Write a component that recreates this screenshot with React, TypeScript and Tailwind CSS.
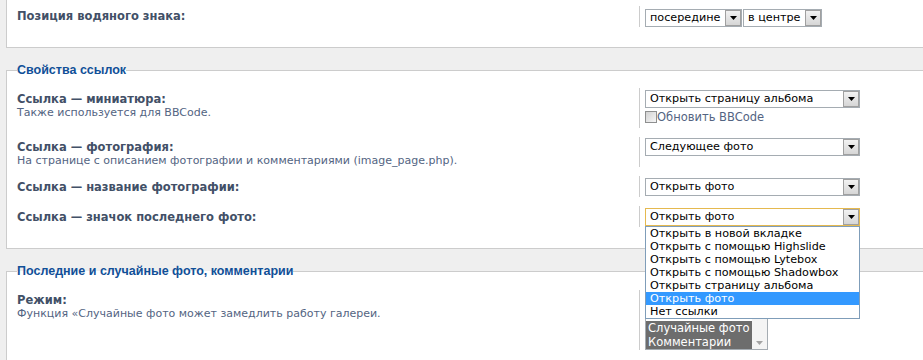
import React from "react";

function ArrowBtn() {
  return (
    <div className="h-[16px] w-[16px] shrink-0 flex items-center justify-center border border-[#a0a0a0] bg-gradient-to-b from-[#f2f2f2] to-[#d6d6d6]">
      <svg width="7" height="4" viewBox="0 0 7 4">
        <path d="M0 0H7L3.5 4Z" fill="#000" />
      </svg>
    </div>
  );
}

function Select({
  value,
  className,
  focused,
}: {
  value: string;
  className: string;
  focused?: boolean;
}) {
  return (
    <div
      className={
        "flex items-center h-[18px] border bg-white " +
        (focused ? "border-[#e5b94f] " : "border-[#a5acb2] ") +
        className
      }
    >
      <span className="flex-1 pl-[4px] text-[11.2px] leading-[16px] text-black whitespace-nowrap overflow-hidden">
        {value}
      </span>
      <ArrowBtn />
    </div>
  );
}

const options = [
  "Открыть в новой вкладке",
  "Открыть с помощью Highslide",
  "Открыть с помощью Lytebox",
  "Открыть с помощью Shadowbox",
  "Открыть страницу альбома",
  "Открыть фото",
  "Нет ссылки",
];

export default function App() {
  return (
    <div className="w-[923px] h-[360px] overflow-hidden bg-[#efefef] font-['DejaVu_Sans',Verdana,sans-serif]">
      <div className="w-[1000px] pl-[6px]">
        {/* Fieldset 1 */}
        <fieldset className="bg-white border-l border-b border-[#cccccc] pt-[6px] pb-[20px] pl-[10px]">
          <div className="grid grid-cols-[622px_1fr]">
            <div className="pt-[4px] text-[11px] leading-[13px]">
              <div className="font-bold text-[11.5px] text-[#425067]">Позиция водяного знака:</div>
            </div>
            <div className="border-l border-[#cccccc] pl-[5px] pt-[3px] flex gap-[1px]">
              <Select value="посередине" className="w-[97px]" />
              <Select value="в центре" className="w-[79px]" />
            </div>
          </div>
        </fieldset>

        {/* Fieldset 2 */}
        <fieldset className="mt-[15px] bg-white border border-r-0 border-[#cccccc] pl-[10px] pt-[11px] pb-[21px]">
          <legend className="font-['Liberation_Sans',Arial,sans-serif] text-[12.5px] leading-[14px] font-bold text-[#115098]">
            Свойства ссылок
          </legend>

          <div className="grid grid-cols-[622px_1fr]">
            <div className="pt-[5px] text-[11px] leading-[13px]">
              <div className="font-bold text-[11.5px] text-[#425067]">Ссылка — миниатюра:</div>
              <div className="text-[#536482]">Также используется для BBCode.</div>
            </div>
            <div className="border-l border-[#cccccc] pl-[5px] pt-[2px] pb-[4px]">
              <Select value="Открыть страницу альбома" className="w-[215px]" />
              <div className="flex items-start h-[16px] pt-[3px]">
                <span className="w-[12px] h-[12px] border border-[#8e8f8f] bg-gradient-to-br from-[#d2d2d2] to-[#f6f6f6]" />
                <span className="text-[11.5px] leading-[12px] text-[#536482]">Обновить BBCode</span>
              </div>
            </div>
          </div>

          <div className="grid grid-cols-[622px_1fr] mt-[9px]">
            <div className="pt-[4px] text-[11px] leading-[13px]">
              <div className="font-bold text-[11.5px] text-[#425067]">Ссылка — фотография:</div>
              <div className="text-[#536482]">
                На странице с описанием фотографии и комментариями (image_page.php).
              </div>
            </div>
            <div className="border-l border-[#cccccc] pl-[5px] pt-[1px]">
              <Select value="Следующее фото" className="w-[215px]" />
            </div>
          </div>

          <div className="grid grid-cols-[622px_1fr] mt-[9px]">
            <div className="pt-[5px] text-[11px] leading-[13px]">
              <div className="font-bold text-[11.5px] text-[#425067]">Ссылка — название фотографии:</div>
            </div>
            <div className="border-l border-[#cccccc] pl-[5px] pt-[2px] pb-[1px]">
              <Select value="Открыть фото" className="w-[215px]" />
            </div>
          </div>

          <div className="grid grid-cols-[622px_1fr] mt-[9px]">
            <div className="pt-[5px] text-[11px] leading-[13px]">
              <div className="font-bold text-[11.5px] text-[#425067]">Ссылка — значок последнего фото:</div>
            </div>
            <div className="border-l border-[#cccccc] pl-[5px] pt-[2px] pb-[1px]">
              <div className="relative w-[215px]">
                <Select value="Открыть фото" className="w-[215px]" focused />
                <div className="absolute left-0 top-full z-10 w-[215px] border border-[#7f9db9] bg-white">
                  {options.map((o) => (
                    <div
                      key={o}
                      className={
                        "h-[13px] leading-[13px] px-[4px] text-[11.2px] whitespace-nowrap " +
                        (o === "Открыть фото" ? "bg-[#3399ff] text-white" : "text-black")
                      }
                    >
                      {o}
                    </div>
                  ))}
                </div>
              </div>
            </div>
          </div>
        </fieldset>

        {/* Fieldset 3 */}
        <fieldset className="mt-[15px] bg-white border border-r-0 border-[#cccccc] pl-[10px] pt-[12px] pb-[20px]">
          <legend className="font-['Liberation_Sans',Arial,sans-serif] text-[12.5px] leading-[14px] font-bold text-[#115098]">
            Последние и случайные фото, комментарии
          </legend>
          <div className="grid grid-cols-[622px_1fr]">
            <div className="pt-[4px] text-[11px] leading-[13px]">
              <div className="font-bold text-[11.5px] text-[#425067]">Режим:</div>
              <div className="text-[#536482]">
                Функция «Случайные фото может замедлить работу галереи.
              </div>
            </div>
            <div className="border-l border-[#cccccc] pl-[5px] pt-[2px]">
              <div className="flex w-[123px] h-[58px] border border-[#a5acb2] bg-white">
                <div className="flex-1 text-[11.5px] leading-[14px]">
                  <div className="h-[14px]" />
                  <div className="h-[14px]" />
                  <div className="h-[14px] pl-[2px] bg-[#6d6d6d] text-white whitespace-nowrap">Случайные фото</div>
                  <div className="h-[14px] pl-[2px] bg-[#6d6d6d] text-white whitespace-nowrap">Комментарии</div>
                </div>
                <div className="w-[15px] bg-[#f4f4f4] flex flex-col justify-between items-center py-[4px]">
                  <svg width="7" height="4" viewBox="0 0 7 4">
                    <path d="M0 4H7L3.5 0Z" fill="#a3a3a3" />
                  </svg>
                  <svg width="7" height="4" viewBox="0 0 7 4">
                    <path d="M0 0H7L3.5 4Z" fill="#a3a3a3" />
                  </svg>
                </div>
              </div>
            </div>
          </div>
        </fieldset>
      </div>
    </div>
  );
}
